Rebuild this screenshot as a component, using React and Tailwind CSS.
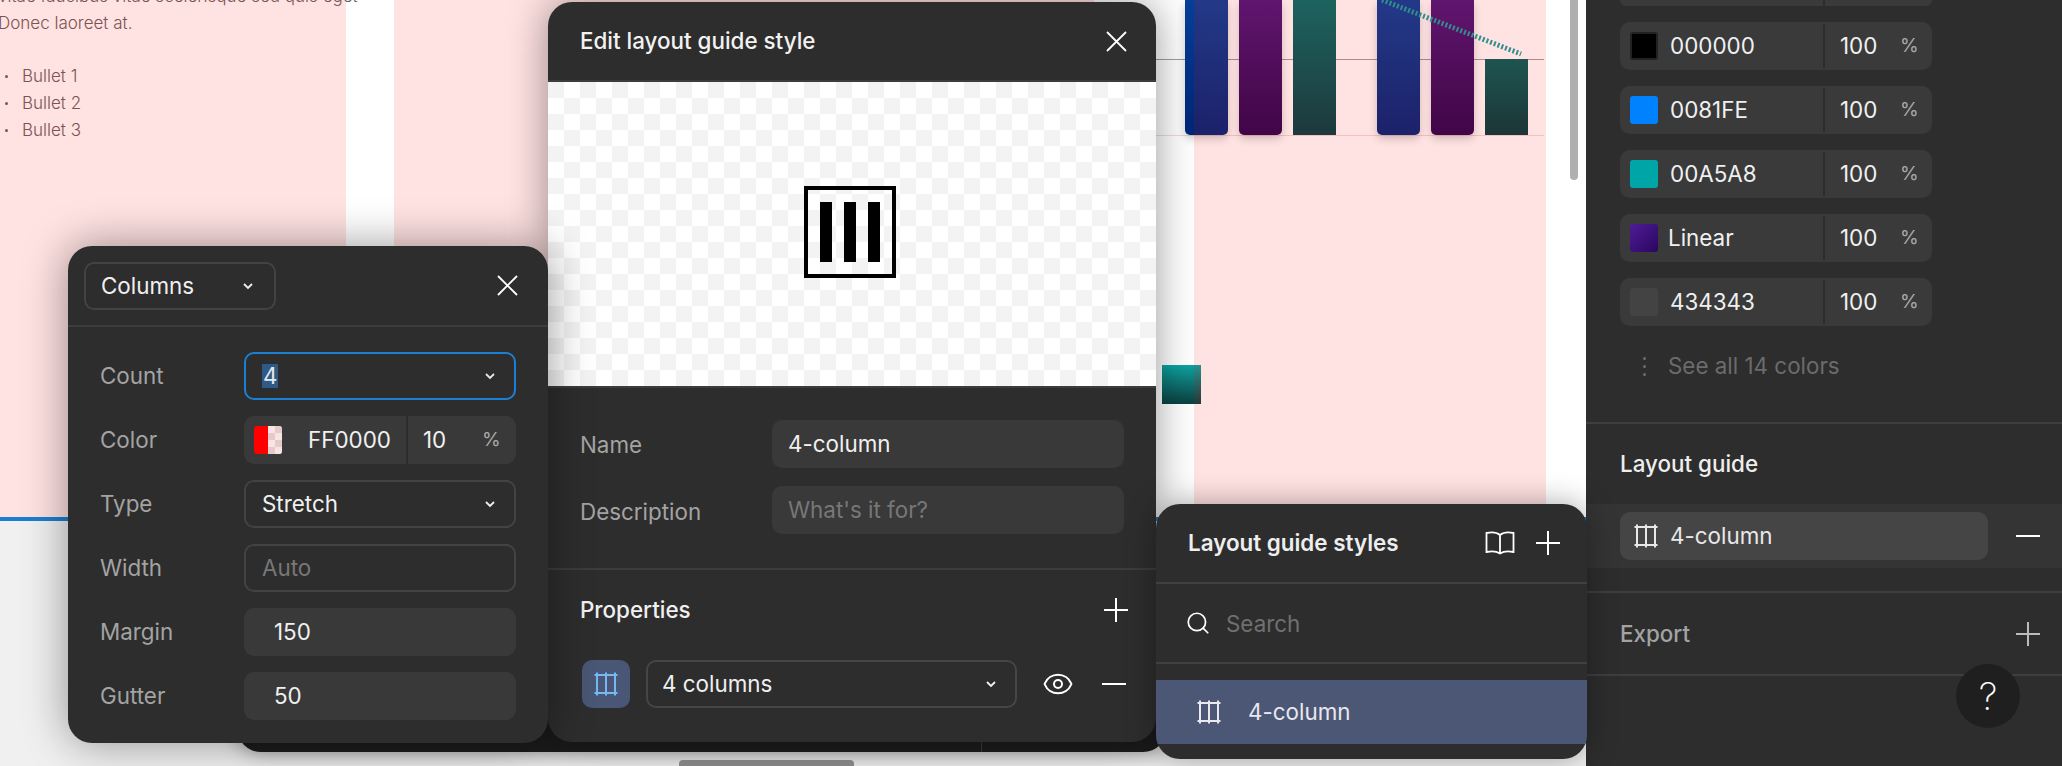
import { Search, Eye } from 'lucide-react';

function Chevron({ className = '' }) {
  return (
    <svg width="12" height="8" viewBox="0 0 12 8" fill="none" stroke="currentColor" strokeWidth="1.8" className={className}>
      <path d="M2 2l4 4 4-4" />
    </svg>
  );
}

function GuideIcon({ size = 24, className = '' }) {
  return (
    <svg width={size} height={size} viewBox="0 0 24 24" fill="none" stroke="currentColor" strokeWidth="2" className={className}>
      <path d="M0.5 3h23M0.5 21h23M3 0.5v23M12 0.5v23M21 0.5v23" />
    </svg>
  );
}

function CloseIcon() {
  return (
    <svg width="21" height="21" viewBox="0 0 21 21" fill="none" stroke="white" strokeWidth="1.8" className="shrink-0">
      <path d="M1 1l19 19M20 1L1 20" />
    </svg>
  );
}

function PlusIcon({ color = 'white' }) {
  return (
    <svg width="24" height="24" viewBox="0 0 24 24" fill="none" stroke={color} strokeWidth="2" className="shrink-0">
      <path d="M0 12h24M12 0v24" />
    </svg>
  );
}

function MinusIcon() {
  return (
    <svg width="24" height="24" viewBox="0 0 24 24" fill="none" stroke="white" strokeWidth="2" className="shrink-0">
      <path d="M0 12h24" />
    </svg>
  );
}

function BookIcon() {
  return (
    <svg width="30" height="24" viewBox="0 0 30 24" fill="none" stroke="white" strokeWidth="1.8" className="shrink-0">
      <path d="M15 4C12 1.5 6 1 1.5 2v19c4.500-1 10.500-.5 13.500 1.500 3-2 9-2.500 13.500-1.500V2C24 1 18 1.500 15 4zM15 4v18.500" />
    </svg>
  );
}

function FieldRow({ label, children }) {
  return (
    <div className="flex h-12 items-center">
      <span className="w-[143px] text-[#a3a3a3]">{label}</span>
      {children}
    </div>
  );
}

function ColumnsPanel() {
  return (
    <div className="absolute left-[68px] top-[246px] z-30 h-[497px] w-[480px] rounded-[24px] bg-[#2d2d2d] text-[22.4px] shadow-[0_0_45px_rgba(0,0,0,0.4)]">
      <div className="flex h-[81px] items-center justify-between border-b-2 border-[#3c3c3c] pl-4 pr-[30px]">
        <div className="flex h-12 w-[192px] items-center justify-between rounded-[10px] border-2 border-[#434343] pl-[15px] pr-[20px] text-[#f0f0f0]">
          Columns
          <Chevron />
        </div>
        <CloseIcon />
      </div>
      <div className="flex flex-col gap-4 pl-8 pt-[25px]">
        <FieldRow label="Count">
          <div className="ml-px flex h-12 w-[272px] items-center justify-between rounded-[10px] border-2 border-[#1b80d4] pl-4 pr-[18px] text-[#e8e8e8]">
            <span className="bg-[#2e5a88] px-px leading-6">4</span>
            <Chevron />
          </div>
        </FieldRow>
        <FieldRow label="Color">
          <div className="ml-px flex h-12 w-[272px] items-center rounded-[10px] bg-[#393939] text-[#f0f0f0]">
            <div className="ml-[10px] flex h-7 w-7 overflow-hidden rounded-[3px]">
              <div className="w-[14px] bg-[#ff0000]" />
              <div className="w-[14px] bg-[#f4dcdc] bg-[repeating-conic-gradient(#e6caca_0_25%,#f7e4e4_0_50%)] bg-[length:14px_14px]" />
            </div>
            <span className="ml-[26px] w-[98px]">FF0000</span>
            <div className="h-12 w-0.5 bg-[#2d2d2d]" />
            <span className="ml-[15px] w-[59px]">10</span>
            <span className="text-[19px] text-[#aaaaaa]">%</span>
          </div>
        </FieldRow>
        <FieldRow label="Type">
          <div className="ml-px flex h-12 w-[272px] items-center justify-between rounded-[10px] border-2 border-[#434343] pl-4 pr-[18px] text-[#f0f0f0]">
            Stretch
            <Chevron />
          </div>
        </FieldRow>
        <FieldRow label="Width">
          <div className="ml-px flex h-12 w-[272px] items-center rounded-[10px] border-2 border-[#434343] pl-4 text-[#777777]">Auto</div>
        </FieldRow>
        <FieldRow label="Margin">
          <div className="ml-px flex h-12 w-[272px] items-center rounded-[10px] bg-[#393939] pl-[30px] text-[#f0f0f0]">150</div>
        </FieldRow>
        <FieldRow label="Gutter">
          <div className="ml-px flex h-12 w-[272px] items-center rounded-[10px] bg-[#393939] pl-[30px] text-[#f0f0f0]">50</div>
        </FieldRow>
      </div>
    </div>
  );
}

function EditModal() {
  return (
    <div className="absolute left-[548px] top-[2px] z-20 flex h-[740px] w-[608px] flex-col overflow-hidden rounded-[24px] bg-[#2d2d2d] text-[22.4px] shadow-[0_0_40px_rgba(0,0,0,0.4)]">
      <div className="flex h-[80px] shrink-0 items-center justify-between border-b-2 border-[#3c3c3c] pl-8 pr-[29px]">
        <span className="font-medium text-[#f2f2f2]">Edit layout guide style</span>
        <CloseIcon />
      </div>
      <div className="flex h-[306px] shrink-0 items-center justify-center border-b-2 border-[#3c3c3c] bg-[repeating-conic-gradient(#f3f3f3_0_25%,#ffffff_0_50%)] bg-[length:32px_32px] bg-[position:16px_0] pb-1 pr-1">
        <div className="flex h-[92px] w-[92px] items-center justify-center gap-3 border-4 border-black">
          <div className="h-[60px] w-3 bg-black" />
          <div className="h-[60px] w-3 bg-black" />
          <div className="h-[60px] w-3 bg-black" />
        </div>
      </div>
      <div className="flex h-[182px] shrink-0 flex-col gap-[18px] border-b-2 border-[#3c3c3c] pl-8 pr-8 pt-[32px]">
        <div className="flex h-12 items-center">
          <span className="w-[192px] pt-0.5 text-[#a3a3a3]">Name</span>
          <div className="flex h-12 flex-1 items-center rounded-[10px] bg-[#393939] pl-4 text-[#f0f0f0]">4-column</div>
        </div>
        <div className="flex h-12 items-center">
          <span className="w-[192px] pt-1 text-[#a3a3a3]">Description</span>
          <div className="flex h-12 flex-1 items-center rounded-[10px] bg-[#393939] pl-4 text-[#777777]">What's it for?</div>
        </div>
      </div>
      <div className="flex h-[79px] shrink-0 items-center justify-between pl-8 pr-7">
        <span className="font-medium text-[#f0f0f0]">Properties</span>
        <PlusIcon />
      </div>
      <div className="flex items-center pl-[34px] pt-[11px]">
        <div className="flex h-12 w-12 items-center justify-center rounded-[10px] bg-[#4a5675] text-[#74b9f2]">
          <GuideIcon />
        </div>
        <div className="ml-4 flex h-12 w-[371px] items-center justify-between rounded-[10px] border-2 border-[#464646] pl-[14px] pr-[18px] text-[#f0f0f0]">
          4 columns
          <Chevron />
        </div>
        <Eye size={32} strokeWidth={1.5} className="ml-[25px] text-white" />
        <div className="ml-7">
          <MinusIcon />
        </div>
      </div>
    </div>
  );
}

function StylesPanel() {
  return (
    <div className="absolute left-[1156px] top-[504px] z-40 h-[255px] w-[431px] overflow-hidden rounded-[24px] bg-[#2d2d2d] text-[22.4px] shadow-[0_0_30px_rgba(0,0,0,0.35)]">
      <div className="flex h-[80px] items-center border-b-2 border-[#404040] pl-8 pr-[27px]">
        <span className="flex-1 font-semibold text-[#eeeeee]">Layout guide styles</span>
        <BookIcon />
        <div className="ml-[21px]">
          <PlusIcon />
        </div>
      </div>
      <div className="flex h-[80px] items-center gap-[15px] border-b-2 border-[#404040] pl-[29px]">
        <Search size={26} strokeWidth={1.6} className="text-white" />
        <span className="pt-0.5 text-[#707070]">Search</span>
      </div>
      <div className="mt-4 flex h-16 items-center gap-[27px] bg-[#4b5775] pl-[41px] text-[#e8e8ee]">
        <GuideIcon />
        4-column
      </div>
    </div>
  );
}

function ColorRow({ swatch, name, nameClass = 'ml-3' }) {
  return (
    <div className="flex h-12 w-[312px] items-center rounded-[10px] bg-[#3a3a3a]">
      <div className="flex w-[203px] items-center">
        <div className={`ml-[10px] h-7 w-7 rounded-[3px] ${swatch}`} />
        <span className={`${nameClass} text-[#f0f0f0]`}>{name}</span>
      </div>
      <div className="h-11 w-0.5 bg-[#2d2d2d]" />
      <span className="ml-[15px] w-[60px] text-[#f0f0f0]">100</span>
      <span className="text-[19px] text-[#aaaaaa]">%</span>
    </div>
  );
}

function Sidebar() {
  return (
    <aside className="flex w-[476px] shrink-0 flex-col bg-[#2d2d2d] text-[22.4px]">
      <div className="ml-[34px] flex h-[6px] w-[312px] justify-end rounded-b-[10px] bg-[#3a3a3a] pr-[107px]">
        <div className="h-full w-0.5 bg-[#2d2d2d]" />
      </div>
      <div className="ml-[34px] mt-4 flex flex-col gap-4">
        <ColorRow swatch="border-2 border-[#222222] bg-black" name="000000" />
        <ColorRow swatch="bg-[#0081fe]" name="0081FE" />
        <ColorRow swatch="bg-[#00a5a8]" name="00A5A8" />
        <ColorRow swatch="bg-gradient-to-br from-[#4f1c96] to-[#2a0660]" name="Linear" nameClass="ml-[10px]" />
        <ColorRow swatch="bg-[#434343]" name="434343" />
      </div>
      <div className="ml-[34px] mt-5 flex h-10 items-center gap-[22px] pl-[23px] text-[#6b6b6b]">
        <div className="flex flex-col gap-[5px]">
          <div className="h-[3px] w-[3px] rounded-full bg-[#6b6b6b]" />
          <div className="h-[3px] w-[3px] rounded-full bg-[#6b6b6b]" />
          <div className="h-[3px] w-[3px] rounded-full bg-[#6b6b6b]" />
        </div>
        See all 14 colors
      </div>
      <div className="mt-9 border-t-2 border-[#3e3e3e]">
        <div className="flex h-[80px] items-center pl-[34px] font-medium text-[#eeeeee]">Layout guide</div>
        <div className="flex h-16 items-center bg-[#343434] pl-[34px]">
          <div className="flex h-12 w-[368px] items-center gap-3 rounded-[10px] bg-[#454545] pl-[14px] text-[#e8e8e8]">
            <GuideIcon />
            4-column
          </div>
          <div className="ml-7">
            <MinusIcon />
          </div>
        </div>
      </div>
      <div className="mt-[23px] flex h-[85px] items-center justify-between border-y-2 border-[#3e3e3e] pl-[34px] pr-[22px] font-medium text-[#a3a3a3]">
        Export
        <PlusIcon color="#bbbbbb" />
      </div>
    </aside>
  );
}

function Chart() {
  return (
    <div className="absolute left-[1156px] top-0 h-[136px] w-[388px]">
      <div className="absolute left-0 right-0 top-[59px] h-px bg-[#a89a9a]" />
      <div className="absolute bottom-0 left-0 right-0 h-px bg-[#eedcdc]" />
      <div className="relative flex h-[135px] items-end gap-[11px] pl-[29px]">
        <div className="h-full w-[43px] rounded-b-[5px] bg-gradient-to-b from-[#074099] to-[#002677] shadow-[0_4px_8px_rgba(0,0,0,0.2)]" />
        <div className="h-full w-[43px] rounded-b-[5px] bg-gradient-to-b from-[#4c187c] to-[#290650] shadow-[0_4px_8px_rgba(0,0,0,0.2)]" />
        <div className="h-full w-[43px] bg-gradient-to-b from-[#00706b] to-[#004044]" />
        <div className="ml-[30px] h-full w-[43px] rounded-b-[5px] bg-gradient-to-b from-[#074099] to-[#002677] shadow-[0_4px_8px_rgba(0,0,0,0.2)]" />
        <div className="h-full w-[43px] rounded-b-[5px] bg-gradient-to-b from-[#4c187c] to-[#290650] shadow-[0_4px_8px_rgba(0,0,0,0.2)]" />
        <div className="h-[76px] w-[43px] bg-gradient-to-b from-[#00605b] to-[#003c3e]" />
      </div>
      <svg className="absolute left-0 top-0" width="388" height="60" fill="none">
        <path d="M226 0L365 54" stroke="#16a0a0" strokeWidth="5" strokeDasharray="2 2" />
      </svg>
    </div>
  );
}

export default function App() {
  return (
    <div className="relative flex h-[766px] w-[2062px] overflow-hidden bg-white font-['Inter',sans-serif]">
      <main className="relative flex-1 bg-white">
        {/* canvas page under the guides */}
        <div className="absolute inset-x-0 bottom-0 top-[521px] bg-[#f0f0f0]" />
        <Chart />
        <div className="absolute left-[-2px] top-[-17px] w-[380px] whitespace-nowrap text-[17px] font-light leading-[27px] text-[#6b5d5e]">
          <p>vitae faucibus vitae scelerisque sed quis eget</p>
          <p>Donec laoreet at.</p>
          <ul className="mt-[26px] flex flex-col">
            <li className="flex items-center gap-[14px] pl-[7px]"><span className="h-[3px] w-[3px] rounded-full bg-[#6b5d5e]" />Bullet 1</li>
            <li className="flex items-center gap-[14px] pl-[7px]"><span className="h-[3px] w-[3px] rounded-full bg-[#6b5d5e]" />Bullet 2</li>
            <li className="flex items-center gap-[14px] pl-[7px]"><span className="h-[3px] w-[3px] rounded-full bg-[#6b5d5e]" />Bullet 3</li>
          </ul>
        </div>
        <div className="absolute left-[1162px] top-[365px] h-[39px] w-[39px] bg-gradient-to-b from-[#0aa5a2] to-[#0b4040]" />
        {/* red 10% layout guide columns */}
        <div className="absolute left-0 top-0 h-[517px] w-[346px] bg-[#ff0000]/[0.115]" />
        <div className="absolute left-[394px] top-0 h-[517px] w-[700px] bg-[#ff0000]/[0.115]" />
        <div className="absolute left-[1194px] top-0 h-[517px] w-[352px] bg-[#ff0000]/[0.115]" />
        <div className="absolute inset-x-0 top-[517px] h-1 bg-[#1a7fd0]" />
        <div className="absolute left-[1570px] top-0 h-[180px] w-2 rounded-b-full bg-[#b0b0b0]" />
        <div className="absolute left-[237px] top-[700px] h-[52px] w-[930px] rounded-b-[24px] bg-[#1c1c1c] shadow-[0_0_20px_rgba(0,0,0,0.4)]" />
        <div className="absolute left-[981px] top-[742px] h-[10px] w-px bg-[#3a3a3a]" />
        <div className="absolute left-[679px] top-[760px] h-[6px] w-[175px] rounded-t-sm bg-[#8a8a8a]" />
        <ColumnsPanel />
        <EditModal />
        <StylesPanel />
      </main>
      <Sidebar />
      <div className="absolute left-[1956px] top-[664px] z-50 flex h-16 w-16 items-center justify-center rounded-full bg-[#1f1f1f] text-[38px] font-extralight text-white">?</div>
    </div>
  );
}
